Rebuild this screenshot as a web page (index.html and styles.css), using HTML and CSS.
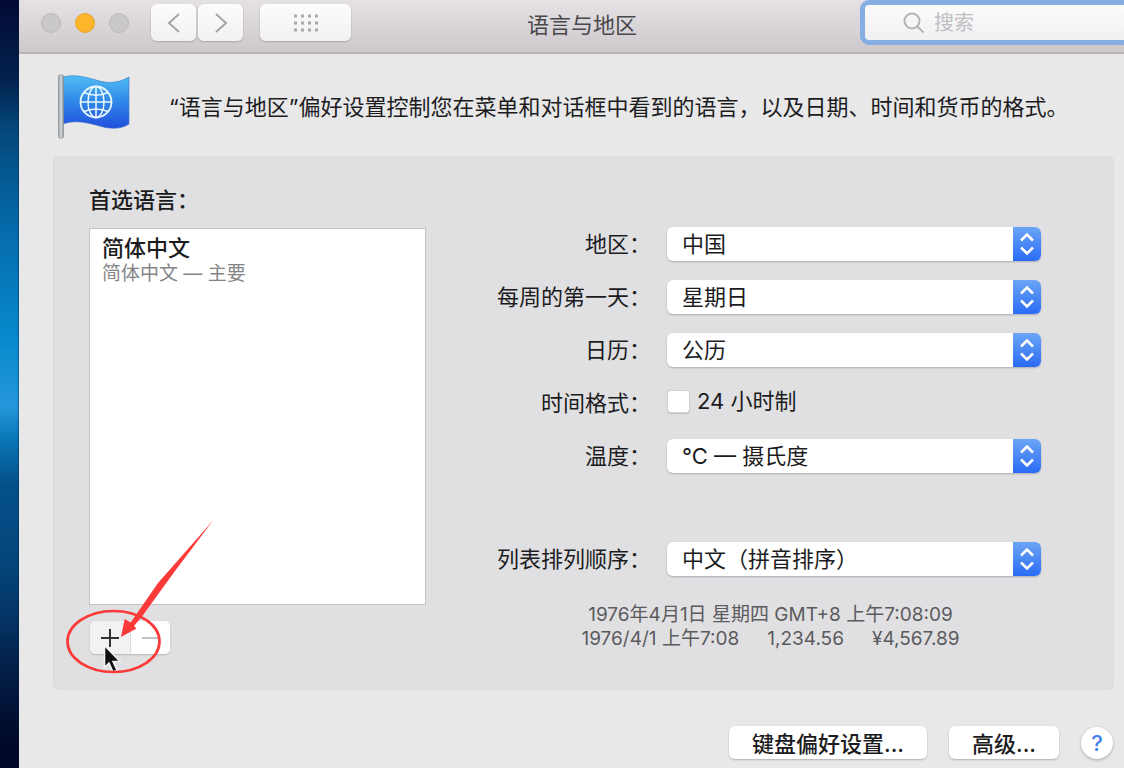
FILE: index.html
```html
<!DOCTYPE html>
<html lang="zh-CN">
<head>
<meta charset="utf-8">
<meta name="viewport" content="width=device-width, initial-scale=1">
<title>语言与地区</title>
<link rel="stylesheet" href="styles.css">
</head>
<body>
<div class="desktop">
  <main class="window">
    <header class="titlebar">
      <div class="controls">
        <div class="lights">
          <button class="light" aria-label="关闭"></button>
          <button class="light light-minimize" aria-label="最小化"></button>
          <button class="light" aria-label="缩放"></button>
        </div>
        <div class="history">
          <button class="tool" aria-label="后退"><svg width="14" height="22" viewBox="0 0 14 22"><path d="M12 2 2 11l10 9"/></svg></button>
          <button class="tool" aria-label="前进"><svg width="14" height="22" viewBox="0 0 14 22"><path d="m2 2 10 9-10 9"/></svg></button>
        </div>
        <button class="tool tool-wide" aria-label="显示全部">
          <svg class="dots" width="26" height="18" viewBox="0 0 26 18"><path d="M1 2h24M1 9h24M1 16h24"/></svg>
        </button>
      </div>
      <h1 class="title">语言与地区</h1>
      <label class="search">
        <svg width="22" height="22" viewBox="0 0 22 22" aria-hidden="true"><circle cx="9" cy="9" r="7.500"/><path d="m14.500 14.500 6 6"/></svg>
        <input class="search-input" type="search" placeholder="搜索" aria-label="搜索">
      </label>
    </header>

    <section class="intro">
      <svg class="flag" width="76" height="66" viewBox="0 0 76 66" aria-hidden="true">
        <defs>
          <linearGradient id="cloth" x1="0" y1="0" x2="0" y2="1"><stop offset="0" stop-color="#50bdf4"/><stop offset=".5" stop-color="#2f86e8"/><stop offset="1" stop-color="#214fdd"/></linearGradient>
          <linearGradient id="pole" x1="0" y1="0" x2="1" y2="0"><stop offset="0" stop-color="#8e989f"/><stop offset=".5" stop-color="#d8dee0"/><stop offset="1" stop-color="#858d93"/></linearGradient>
        </defs>
        <path d="M6 3C18 0 28 3 39 6c12 4 23 3 33-3v47c-9 6-21 5-33 1-12-3-22-5-33-1z" fill="url(#cloth)" stroke="#3b74c4" stroke-width=".6"/>
        <rect x="1.500" y="1" width="5" height="63" rx="1.500" fill="url(#pole)" stroke="#899197" stroke-width=".7"/>
        <g fill="none" stroke="#eaf7ff" stroke-width="1.500">
          <circle cx="39" cy="28" r="15.500" stroke-width="1.800"/>
          <ellipse cx="39" cy="28" rx="8" ry="15.500"/>
          <path d="M39 12.500v31M23.500 28h31M27 18.500c7 3.500 17 3.500 24 0M27 37.500c7-3.500 17-3.500 24 0"/>
        </g>
      </svg>
      <p class="intro-text">“语言与地区”偏好设置控制您在菜单和对话框中看到的语言，以及日期、时间和货币的格式。</p>
    </section>

    <section class="panel">
      <div class="languages">
        <h2 class="heading">首选语言：</h2>
        <ul class="list">
          <li class="item">
            <span class="item-name">简体中文</span>
            <span class="item-note">简体中文 — 主要</span>
          </li>
        </ul>
        <div class="list-tools">
          <button class="list-tool list-tool-pressed" aria-label="添加语言"><svg width="20" height="20" viewBox="0 0 20 20"><path d="M10 1v18M1 10h18"/></svg></button>
          <button class="list-tool" aria-label="移除语言" disabled><svg width="20" height="20" viewBox="0 0 20 20"><path d="M2 10h16"/></svg></button>
          <svg class="callout" width="160" height="170" viewBox="60 510 160 170" aria-hidden="true">
            <path d="M104.500 645.500v22l4.500-4.500 4 9 4-1.800-4-8.700h7z" fill="#111" stroke="#f5f5f5" stroke-width="1.500"/>
            <ellipse cx="113.500" cy="641.500" rx="46" ry="30.500" fill="none" stroke="#fb3a39" stroke-width="2.700"/>
            <path d="M121 637l3.700-18 6 3.500L158 583 213 520.500 175 571 142 616.500 134 626l2.500 2.500z" fill="#fb3a39"/>
          </svg>
        </div>
      </div>

      <form class="form">
        <label class="label" for="region">地区：</label>
        <div class="popup"><select id="region" class="select"><option>中国</option></select><span class="cap"><svg width="14" height="22" viewBox="0 0 14 22"><path d="m1 7.500 6-6 6 6M1 14.500l6 6 6-6"/></svg></span></div>

        <label class="label" for="weekday">每周的第一天：</label>
        <div class="popup"><select id="weekday" class="select"><option>星期日</option></select><span class="cap"><svg width="14" height="22" viewBox="0 0 14 22"><path d="m1 7.500 6-6 6 6M1 14.500l6 6 6-6"/></svg></span></div>

        <label class="label" for="calendar">日历：</label>
        <div class="popup"><select id="calendar" class="select"><option>公历</option></select><span class="cap"><svg width="14" height="22" viewBox="0 0 14 22"><path d="m1 7.500 6-6 6 6M1 14.500l6 6 6-6"/></svg></span></div>

        <span class="label">时间格式：</span>
        <label class="check"><input class="checkbox" type="checkbox">24 小时制</label>

        <label class="label" for="temperature">温度：</label>
        <div class="popup"><select id="temperature" class="select"><option>°C — 摄氏度</option></select><span class="cap"><svg width="14" height="22" viewBox="0 0 14 22"><path d="m1 7.500 6-6 6 6M1 14.500l6 6 6-6"/></svg></span></div>

        <label class="label label-sort" for="sort">列表排列顺序：</label>
        <div class="popup popup-sort"><select id="sort" class="select"><option>中文（拼音排序）</option></select><span class="cap"><svg width="14" height="22" viewBox="0 0 14 22"><path d="m1 7.500 6-6 6 6M1 14.500l6 6 6-6"/></svg></span></div>

        <div class="sample">
          <p class="sample-line">1976年4月1日 星期四 GMT+8 上午7:08:09</p>
          <p class="sample-line"><span>1976/4/1 上午7:08</span><span>1,234.56</span><span>¥4,567.89</span></p>
        </div>
      </form>
    </section>

    <footer class="footer">
      <button class="button">键盘偏好设置...</button>
      <button class="button">高级...</button>
      <button class="help" aria-label="帮助">?</button>
    </footer>
  </main>
</div>
</body>
</html>
```
FILE: styles.css
```css
* {
  box-sizing: border-box;
}

body,
h1,
h2,
p,
ul {
  margin: 0;
  padding: 0;
}

body,
button,
input,
select {
  font-family: Inter, "Noto Sans CJK SC", sans-serif;
  font-size: 22px;
  color: #1c1c1e;
}

body {
  overflow: hidden;
}

button {
  border: 0;
  padding: 0;
}

.desktop {
  display: flex;
  min-height: 100vh;
  padding-left: 19px;
  background: linear-gradient(#020a35 0%, #03204c 10%, #05497c 17%, #0567a5 28%, #0789cd 44%, #2496d9 53%, #0b78b8 57%, #04518a 63%, #04457a 74%, #042f5e 82%, #031c43 88%, #010828 97%);
}

.window {
  flex: 1;
  min-width: 0;
  overflow: hidden;
  background: #e8e8e9;
  box-shadow: 0 0 2px #001a40;
}

/* Title bar: its right end runs past the screen edge */
.titlebar {
  display: grid;
  grid-template-columns: 1fr auto 1fr;
  align-items: center;
  height: 54px;
  margin-right: -21px;
  padding-bottom: 7px;
  background: linear-gradient(#e5e1e5, #cdc8cc);
  border-bottom: 2px solid #bab5b8;
}

.controls {
  display: flex;
  align-items: center;
  padding-left: 22px;
}

.lights {
  display: flex;
  gap: 14px;
}

.light {
  width: 20px;
  height: 20px;
  border: 1px solid #bbb8bb;
  border-radius: 50%;
  background: #cac8ca;
}

.light-minimize {
  border-color: #e9a32c;
  background: #fdb62b;
}

.history {
  display: flex;
  gap: 2px;
  margin: 0 17px 0 22px;
}

.tool {
  display: grid;
  place-items: center;
  width: 45px;
  height: 37px;
  border-radius: 6px;
  background: linear-gradient(#fcfcfc, #f2f1f2);
  box-shadow: 0 1px 2px #a9a5a9;
}

.tool svg {
  fill: none;
  stroke: #a5a4a6;
  stroke-width: 2;
}

.tool .dots {
  stroke: #aaa9ab;
  stroke-width: 3;
  stroke-dasharray: 3 4;
}

.tool-wide {
  width: 91px;
}

.title {
  padding-top: 4px;
  font-size: 22px;
  line-height: 30px;
  font-weight: 400;
  color: #49474b;
}

.search {
  display: flex;
  align-items: center;
  justify-self: end;
  gap: 9px;
  width: 285px;
  height: 45px;
  padding-left: 38px;
  border: 5px solid #86aee2;
  border-radius: 9px;
  background: linear-gradient(#fbfbfc, #f0eff1);
}

.search svg {
  flex: none;
  fill: none;
  stroke: #b5b4b8;
  stroke-width: 2;
}

.search-input {
  flex: 1;
  min-width: 0;
  padding: 0;
  border: 0;
  outline: 0;
  background: transparent;
  font-size: 20px;
}

.search-input::placeholder {
  color: #bfbec2;
}

/* Introduction */
.intro {
  display: flex;
  align-items: center;
  gap: 36px;
  height: 102px;
  padding: 4px 20px 0 38px;
}

.flag {
  flex: none;
}

.intro-text {
  line-height: 30px;
  white-space: nowrap;
}

/* Settings panel */
.panel {
  display: grid;
  grid-template-columns: 337fr 615fr;
  margin: 0 10px 0 34px;
  padding: 29px 73px 36px 36px;
  border-radius: 6px;
  background: #e0e0e2;
  box-shadow: inset 0 0 2px #d2d2d4;
}

.heading {
  margin-bottom: 13px;
  font-size: 22px;
  line-height: 30px;
  font-weight: 500;
}

.list {
  height: 377px;
  padding: 6px 12px;
  border: 1px solid #c3c3c5;
  background: #fff;
  list-style: none;
}

.item-name,
.item-note {
  display: block;
}

.item-name {
  line-height: 26px;
  font-weight: 500;
}

.item-note {
  font-size: 19px;
  line-height: 26px;
  color: #858587;
}

.list-tools {
  position: relative;
  display: flex;
  width: 80px;
  height: 33px;
  margin: 16px 0 0 1px;
  border-radius: 5px;
  box-shadow: 0 1px 2px #b5b5b8;
}

.list-tool {
  display: grid;
  flex: 1;
  place-items: center;
  border-radius: 0 5px 5px 0;
  background: #fff;
}

.list-tool svg {
  fill: none;
  stroke: #c4c4c6;
  stroke-width: 2;
}

.list-tool-pressed {
  border-right: 1px solid #dedee0;
  border-radius: 5px 0 0 5px;
  background: #f2f1f3;
}

.list-tool-pressed svg {
  stroke: #333;
}

.callout {
  position: absolute;
  top: -111px;
  left: -30px;
  pointer-events: none;
}

/* Form */
.form {
  display: grid;
  grid-template-columns: 225fr 374fr;
  grid-auto-rows: 34px;
  align-content: start;
  align-items: start;
  gap: 19px 16px;
  padding-top: 42px;
}

.label {
  text-align: right;
  line-height: 34px;
  white-space: nowrap;
}

.popup {
  position: relative;
}

.select {
  display: block;
  width: 100%;
  height: 34px;
  padding: 0 40px 0 15px;
  border: 0;
  border-radius: 6px;
  appearance: none;
  background: #fff;
  box-shadow: 0 1px 2px #acacaf;
}

.cap {
  position: absolute;
  top: 0;
  right: 0;
  bottom: 0;
  display: grid;
  place-items: center;
  width: 28px;
  border-radius: 0 6px 6px 0;
  background: linear-gradient(#6ba6f5, #2a6bf5);
  pointer-events: none;
}

.cap svg {
  fill: none;
  stroke: #fff;
  stroke-width: 2.5;
}

.check {
  display: flex;
  align-items: center;
  gap: 7px;
  line-height: 30px;
}

.checkbox {
  width: 23px;
  height: 23px;
  margin: 0;
  border: 1px solid #d2d2d4;
  border-radius: 4px;
  appearance: none;
  background: #fff;
  box-shadow: 0 1px 1px #c0c0c2;
}

.checkbox:checked {
  background: #3b7cf5;
}

.label-sort,
.popup-sort {
  margin-top: 50px;
}

.sample {
  grid-column: 1 / -1;
  margin-top: 58px;
  padding-left: 74px;
  font-size: 19px;
  line-height: 24px;
  color: #5b5b5e;
}

.sample-line {
  display: flex;
  justify-content: center;
  gap: 28px;
  white-space: nowrap;
}

/* Footer */
.footer {
  display: flex;
  align-items: center;
  justify-content: flex-end;
  gap: 22px;
  padding: 36px 11px 9px;
}

.button {
  height: 33px;
  padding: 0 23px 5px;
  border-radius: 6px;
  background: #fff;
  box-shadow: 0 1px 2px #b0b0b3;
  font-weight: 500;
}

.help {
  width: 32px;
  height: 32px;
  border-radius: 50%;
  background: #fff;
  box-shadow: 0 1px 3px #a5a5a8;
  color: #3f7ff0;
  font-weight: 500;
}
```
